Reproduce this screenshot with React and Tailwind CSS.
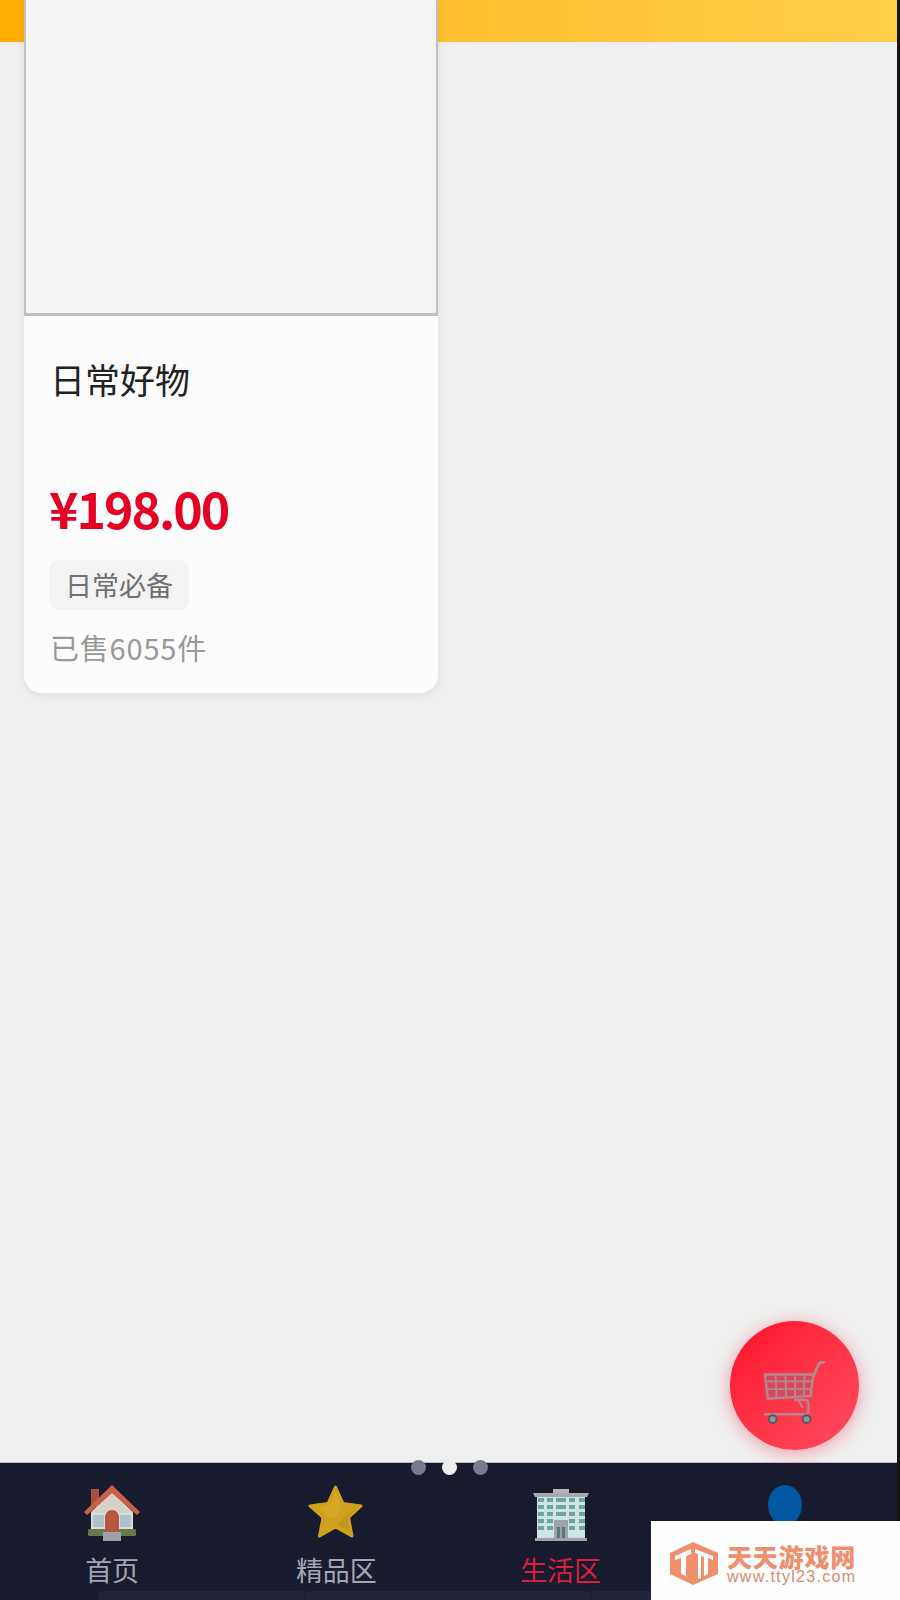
import React from "react";

const House = () => (
  <svg width="56" height="56" viewBox="0 0 56 56">
    <rect x="7" y="4" width="8" height="18" fill="#a8503f" />
    <path d="M7 27 28 7l21 20v20H7z" fill="#d9d0c6" />
    <path d="M0 27 28 0l28 27-3 3L28 8 3 30z" fill="#cc5f47" />
    <rect x="8" y="29" width="13" height="14" fill="#a9c2cc" stroke="#e6e2da" strokeWidth="1.500" />
    <rect x="35" y="29" width="13" height="14" fill="#a9c2cc" stroke="#e6e2da" strokeWidth="1.500" />
    <path d="M21 47V32a7 7 0 0 1 14 0v15z" fill="#b9553e" />
    <rect x="4" y="44" width="18" height="7" rx="1.500" fill="#69794f" />
    <rect x="34" y="44" width="18" height="7" rx="1.500" fill="#69794f" />
    <rect x="19" y="47" width="18" height="9" fill="#9ea0a6" />
  </svg>
);

const Star = () => (
  <svg width="56" height="56" viewBox="0 0 56 56">
    <path
      d="M27.500 2 35 18.500 53 21 40.500 32.500 44 51 27.500 42 11.500 51 15 32.500 2 21 20 18.500z"
      fill="#cfa11f"
      stroke="#cfa11f"
      strokeWidth="3"
      strokeLinejoin="round"
    />
    <path d="M27.500 6 33 20l-5 14-9-3-8-9 10-2z" fill="#d6a824" />
    <path d="M48 24 38 31 29 40l6 3 7 3-2.500-14z" fill="#c4951d" />
  </svg>
);

const Building = () => {
  const rows = [9, 16, 23, 30, 37];
  const cols = [5, 14, 36, 46];
  return (
    <svg width="56" height="52" viewBox="0 0 56 52">
      <rect x="20" y="0" width="16" height="5" fill="#b3b6b8" />
      <rect x="4" y="5" width="48" height="45" fill="#cfe3e0" />
      <path d="M0 4h56l-2 4H2z" fill="#a6aaad" />
      {rows.map((y) =>
        cols.map((x) => <rect key={`${x}-${y}`} x={x} y={y} width="6" height="4" fill="#6aa6a6" />)
      )}
      <rect x="23" y="9" width="10" height="4" fill="#6aa6a6" />
      <rect x="23" y="16" width="10" height="4" fill="#6aa6a6" />
      <rect x="23" y="23" width="10" height="4" fill="#6aa6a6" />
      <rect x="21" y="31" width="14" height="19" fill="#a0a2a4" />
      <rect x="24" y="38" width="3" height="12" fill="#55797c" />
      <rect x="29" y="38" width="3" height="12" fill="#55797c" />
      <rect x="2" y="49" width="52" height="3" fill="#a0a4a6" />
    </svg>
  );
};

const Cart = () => (
  <svg width="64" height="64" viewBox="0 0 66 66" fill="none" stroke="#b3878e">
    <path d="M2 14h50l-3 22-44 3z" fill="#d8485c" strokeWidth="2.500" />
    <path d="M13 14l1 24M23 14l1 23M33 14l0 22M43 14l-1 21M3 21h48M4 29h46" strokeWidth="2" />
    <path d="M52 16 57 4c1-2 3-3 6-3" strokeWidth="3" strokeLinecap="round" />
    <path d="M33 40h9c4 0 5 2 5 5v6c0 3-2 4-5 4H2" strokeWidth="2.500" strokeLinecap="round" />
    <path d="M36 40c3 3 3 6 5 8" strokeWidth="2" />
    <circle cx="10" cy="60" r="4" fill="#6fa3a8" stroke="#6a4f55" strokeWidth="2" />
    <circle cx="45" cy="60" r="4" fill="#6fa3a8" stroke="#6a4f55" strokeWidth="2" />
  </svg>
);

const Logo = () => (
  <svg width="49" height="43" viewBox="0 0 49 43">
    <path d="M23 0 48 11v21L23 43 0 32V11z" fill="#ef8f6e" />
    <path d="M5 14 21 7v5l-5 2v20l-5-2V16l-6 2z" fill="#fff" />
    <path d="M25 7 43 14v4l-5-2v16l-4 2V15l-3-1v22l-3 1V12l-3-1z" fill="#fff" />
  </svg>
);

const tabs = [
  { key: "home", label: "首页", icon: <House />, color: "text-[#a3a6b2]" },
  { key: "best", label: "精品区", icon: <Star />, color: "text-[#a3a6b2]" },
  { key: "life", label: "生活区", icon: <Building />, color: "text-[#d81f3d]" },
  {
    key: "me",
    label: null,
    icon: <div className="h-[40px] w-[34px] self-start rounded-[50%] bg-[#0258a3]" />,
    color: "text-[#a3a6b2]",
  },
];

export default function App() {
  return (
    <div className="relative flex h-[1600px] w-[900px] flex-col overflow-hidden bg-[#141414] pr-[3px] font-['Noto_Sans_CJK_SC','Noto_Sans',sans-serif]">
      <div className="flex flex-1 flex-col bg-[#efefef]">
        <div className="h-[42px] shrink-0 bg-gradient-to-r from-[#ffae00] to-[#ffcf48]" />
        <main className="-mt-[42px] flex-1 pl-6">
          <article className="w-[414px] rounded-b-[18px] bg-[#fcfcfc] shadow-[0_2px_8px_rgba(0,0,0,0.08)]">
            <div className="h-[316px] border-x-2 border-b-[3px] border-[#c0c0c0] bg-[#f4f4f4]" />
            <div className="px-[26px] pb-[28px] pt-[39px]">
              <h2 className="text-[35px] font-normal leading-[48px] text-[#222222]">日常好物</h2>
              <p className="-ml-[1px] mt-[72px] text-[50px] font-bold leading-[64px] tracking-[-2px] text-[#e60023]">
                ¥198.00
              </p>
              <span className="-ml-[1px] mt-[21px] flex h-[50px] w-[140px] items-center justify-center rounded-[10px] bg-[#f3f3f3] text-[27px] text-[#707070]">
                日常必备
              </span>
              <p className="mt-[19px] text-[29px] leading-[36px] tracking-[0.800px] text-[#999999]">已售6055件</p>
            </div>
          </article>
        </main>
      </div>

      <nav className="relative shrink-0 border-t border-t-[#b9bac8] bg-[#181a2e]">
        <div className="grid h-[128px] grid-cols-4">
          {tabs.map((t) => (
            <div key={t.key} className="flex flex-col items-center pt-[22px]">
              <div className="flex h-[56px] items-end justify-center">{t.icon}</div>
              {t.label && <span className={`mt-[13px] h-[32px] text-[27px] leading-[32px] ${t.color}`}>{t.label}</span>}
            </div>
          ))}
        </div>
        <div className="flex h-[9px] pl-[98px]">
          <div className="h-full w-[207px] rounded-t-[3px] bg-[#21233a]" />
          <div className="ml-px h-full w-[284px] rounded-t-[3px] bg-[#21233a]" />
          <div className="ml-px h-full flex-1 rounded-t-[3px] bg-[#21233a]" />
        </div>
        <div className="absolute left-[411px] top-[-3px] flex gap-[16px]">
          <span className="h-[15px] w-[15px] rounded-full bg-[#7a7c8b]" />
          <span className="h-[15px] w-[15px] rounded-full bg-[#eeeeee]" />
          <span className="h-[15px] w-[15px] rounded-full bg-[#7a7c8b]" />
        </div>
      </nav>

      <button className="absolute left-[730px] top-[1321px] flex h-[129px] w-[129px] items-center justify-center rounded-full bg-gradient-to-br from-[#ff0029] to-[#ff4a5e] pt-[14px] shadow-[0_3px_18px_rgba(255,30,60,0.4)]">
        <Cart />
      </button>

      <aside className="absolute left-[651px] top-[1521px] flex h-[79px] w-[249px] items-center gap-[8px] bg-[#fefefe] pl-[19px] pt-[6px]">
        <Logo />
        <div className="flex flex-col">
          <span className="text-[25px] font-black leading-[26px] tracking-[0.800px] text-[#ef8f6e]">天天游戏网</span>
          <span className="font-['Liberation_Sans',sans-serif] text-[16px] leading-[16px] tracking-[1.300px] text-[#d68a70]">
            www.ttyl23.com
          </span>
        </div>
      </aside>
    </div>
  );
}
